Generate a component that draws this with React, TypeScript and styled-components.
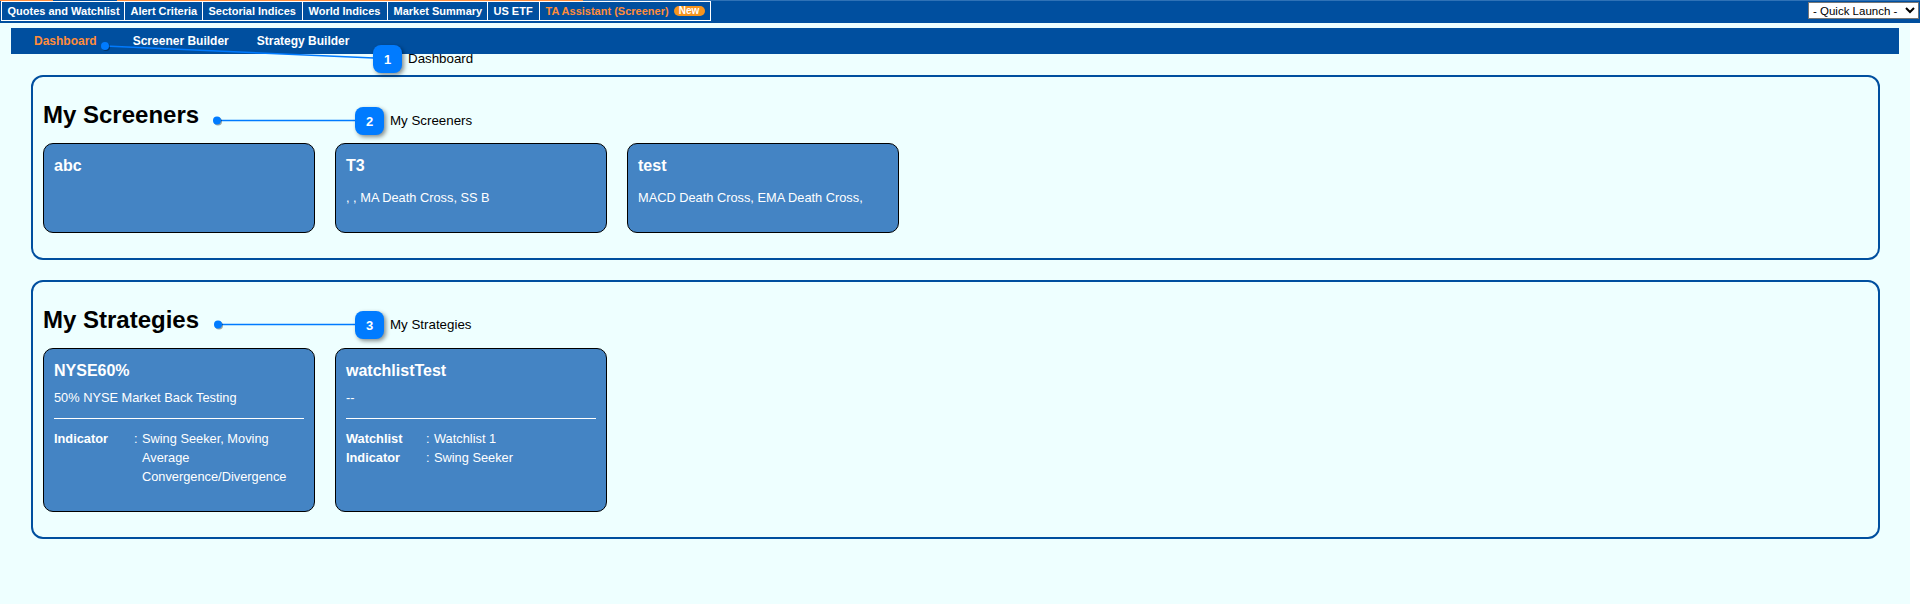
import React from "react";
import styled, { createGlobalStyle } from "styled-components";

const GlobalStyle = createGlobalStyle`
  html, body {
    margin: 0;
    padding: 0;
    height: 604px;
    overflow: hidden;
    background: #fff;
    font-family: "Liberation Sans", Arial, sans-serif;
  }
`;

const blue = "#004f9f";
const cardBlue = "#4484c4";
const orange = "#ff8c3a";
const pin = "#007bff";

const TopBar = styled.div`
  height: 23px;
  box-sizing: border-box;
  padding: 1px 1px 0 1px;
  background: ${blue};
  display: flex;
  justify-content: space-between;
  align-items: flex-start;
  position: relative;
`;

const TopStripe = styled.div`
  position: absolute;
  top: 0;
  left: 0;
  right: 0;
  height: 1px;
  background: linear-gradient(
    to right,
    ${orange} 0 53px,
    ${blue} 53px 117px,
    ${orange} 117px 583px,
    #2f72b6 583px
  );
`;

const Tabs = styled.div`
  display: flex;
  height: 20px;
  box-sizing: border-box;
  border: 1px solid #fff;
`;

const Tab = styled.a<{ $active?: boolean; $w: number }>`
  width: ${(p) => p.$w}px;
  box-sizing: border-box;
  display: flex;
  align-items: center;
  gap: 5px;
  padding-left: 5.5px;
  font-size: 11px;
  font-weight: bold;
  white-space: nowrap;
  color: ${(p) => (p.$active ? orange : "#fff")};
  border-right: 1px solid #fff;
  &:last-child {
    border-right: 0;
  }
`;

const NewBadge = styled.span`
  width: 31px;
  height: 10px;
  border-radius: 5px;
  background: #f7941d;
  color: #fff;
  font-size: 10px;
  line-height: 10px;
  text-align: center;
`;

const QuickLaunch = styled.select`
  width: 111px;
  height: 17px;
  margin: 1px 0 0 0;
  padding: 0;
  font-family: "Liberation Sans", Arial, sans-serif;
  font-size: 11.5px;
  background: #fff;
  color: #000;
  border: 1px solid #767676;
  border-radius: 0;
`;

const Shell = styled.div`
  width: 1910px;
  height: 581px;
  box-sizing: border-box;
  padding-top: 5px;
  background: #eeffff;
  position: relative;
`;

const SubNav = styled.div`
  height: 26px;
  margin: 0 11px 21px;
  background: ${blue};
  display: flex;
  align-items: center;
  padding-left: 23px;
`;

const SubLink = styled.a<{ $active?: boolean; $after: number }>`
  margin-right: ${(p) => p.$after}px;
  font-size: 12px;
  font-weight: bold;
  color: ${(p) => (p.$active ? orange : "#fff")};
`;

const Section = styled.section<{ $h: number; $after: number }>`
  height: ${(p) => p.$h}px;
  box-sizing: border-box;
  margin: 0 30px ${(p) => p.$after}px 31px;
  padding: 0 10px;
  border: 2px solid ${blue};
  border-radius: 12px;
`;

const Heading = styled.h2`
  height: 66px;
  margin: 0;
  padding-top: 24px;
  box-sizing: border-box;
  font-size: 24px;
  line-height: 28px;
  font-weight: bold;
  color: #000;
`;

const CardRow = styled.div`
  display: flex;
  gap: 20px;
`;

const Card = styled.div<{ $h: number }>`
  width: 272px;
  height: ${(p) => p.$h}px;
  box-sizing: border-box;
  padding: 13px 10px 0;
  background: ${cardBlue};
  border: 1px solid #000;
  border-radius: 10px;
  color: #fff;
`;

const CardTitle = styled.div`
  font-size: 16px;
  line-height: 18px;
  font-weight: bold;
`;

const CardText = styled.div<{ $top: number }>`
  margin-top: ${(p) => p.$top}px;
  font-size: 12.8px;
  line-height: 18px;
`;

const Rule = styled.hr`
  margin: 11px 0 10px;
  border: 0;
  border-top: 1px solid #fff;
`;

const Meta = styled.div`
  display: grid;
  grid-template-columns: 80px 8px 1fr;
  font-size: 12.8px;
  line-height: 19px;
`;

const MetaLabel = styled.span`
  font-weight: bold;
`;

const Overlay = styled.svg`
  position: absolute;
  top: -23px;
  left: 0;
  pointer-events: none;
  overflow: visible;
`;

const Badge = styled.div<{ $x: number; $y: number }>`
  position: absolute;
  left: ${(p) => p.$x}px;
  top: ${(p) => p.$y - 23}px;
  width: 29px;
  height: 28px;
  border-radius: 8px;
  background: ${pin};
  box-shadow: 2px 2px 4px rgba(0, 0, 0, 0.45);
  color: #fff;
  font-size: 13px;
  font-weight: bold;
  display: flex;
  align-items: center;
  justify-content: center;
`;

const Note = styled.span<{ $x: number; $y: number }>`
  position: absolute;
  left: ${(p) => p.$x}px;
  top: ${(p) => p.$y - 23}px;
  font-size: 13.33px;
  line-height: 16px;
  color: #000;
`;

const callouts = [
  { n: 1, text: "Dashboard", dot: [105, 46], end: [374, 58], badge: [373, 45], note: [408, 51] },
  { n: 2, text: "My Screeners", dot: [217, 120.5], end: [356, 120.5], badge: [355, 107], note: [390, 113] },
  { n: 3, text: "My Strategies", dot: [218, 324.5], end: [356, 324.5], badge: [355, 311], note: [390, 317] },
];

export default function App() {
  return (
    <>
      <GlobalStyle />
      <TopBar>
        <TopStripe />
        <Tabs>
          <Tab $w={123}>Quotes and Watchlist</Tab>
          <Tab $w={78}>Alert Criteria</Tab>
          <Tab $w={100}>Sectorial Indices</Tab>
          <Tab $w={85}>World Indices</Tab>
          <Tab $w={100}>Market Summary</Tab>
          <Tab $w={52}>US ETF</Tab>
          <Tab $w={170} $active>
            TA Assistant (Screener) <NewBadge>New</NewBadge>
          </Tab>
        </Tabs>
        <QuickLaunch defaultValue="q">
          <option value="q">- Quick Launch -</option>
        </QuickLaunch>
      </TopBar>
      <Shell>
        <SubNav>
          <SubLink $active $after={36}>Dashboard</SubLink>
          <SubLink $after={28}>Screener Builder</SubLink>
          <SubLink $after={0}>Strategy Builder</SubLink>
        </SubNav>

        <Section $h={185} $after={20}>
          <Heading>My Screeners</Heading>
          <CardRow>
            <Card $h={90}>
              <CardTitle>abc</CardTitle>
            </Card>
            <Card $h={90}>
              <CardTitle>T3</CardTitle>
              <CardText $top={14}>, , MA Death Cross, SS B</CardText>
            </Card>
            <Card $h={90}>
              <CardTitle>test</CardTitle>
              <CardText $top={14}>MACD Death Cross, EMA Death Cross,</CardText>
            </Card>
          </CardRow>
        </Section>

        <Section $h={259} $after={0}>
          <Heading>My Strategies</Heading>
          <CardRow>
            <Card $h={164}>
              <CardTitle>NYSE60%</CardTitle>
              <CardText $top={9}>50% NYSE Market Back Testing</CardText>
              <Rule />
              <Meta>
                <MetaLabel>Indicator</MetaLabel>
                <span>:</span>
                <span>Swing Seeker, Moving Average Convergence/Divergence</span>
              </Meta>
            </Card>
            <Card $h={164}>
              <CardTitle>watchlistTest</CardTitle>
              <CardText $top={9}>--</CardText>
              <Rule />
              <Meta>
                <MetaLabel>Watchlist</MetaLabel>
                <span>:</span>
                <span>Watchlist 1</span>
                <MetaLabel>Indicator</MetaLabel>
                <span>:</span>
                <span>Swing Seeker</span>
              </Meta>
            </Card>
          </CardRow>
        </Section>

        <Overlay width="1" height="1">
          {callouts.map((c) => (
            <g key={c.n}>
              <line x1={c.dot[0]} y1={c.dot[1]} x2={c.end[0]} y2={c.end[1]} stroke={pin} strokeWidth="1.5" />
              <circle cx={c.dot[0] + 1} cy={c.dot[1] + 1} r="4" fill="rgba(0,0,0,0.35)" />
              <circle cx={c.dot[0]} cy={c.dot[1]} r="4" fill={pin} />
            </g>
          ))}
        </Overlay>
        {callouts.map((c) => (
          <React.Fragment key={c.n}>
            <Badge $x={c.badge[0]} $y={c.badge[1]}>{c.n}</Badge>
            <Note $x={c.note[0]} $y={c.note[1]}>{c.text}</Note>
          </React.Fragment>
        ))}
      </Shell>
    </>
  );
}
